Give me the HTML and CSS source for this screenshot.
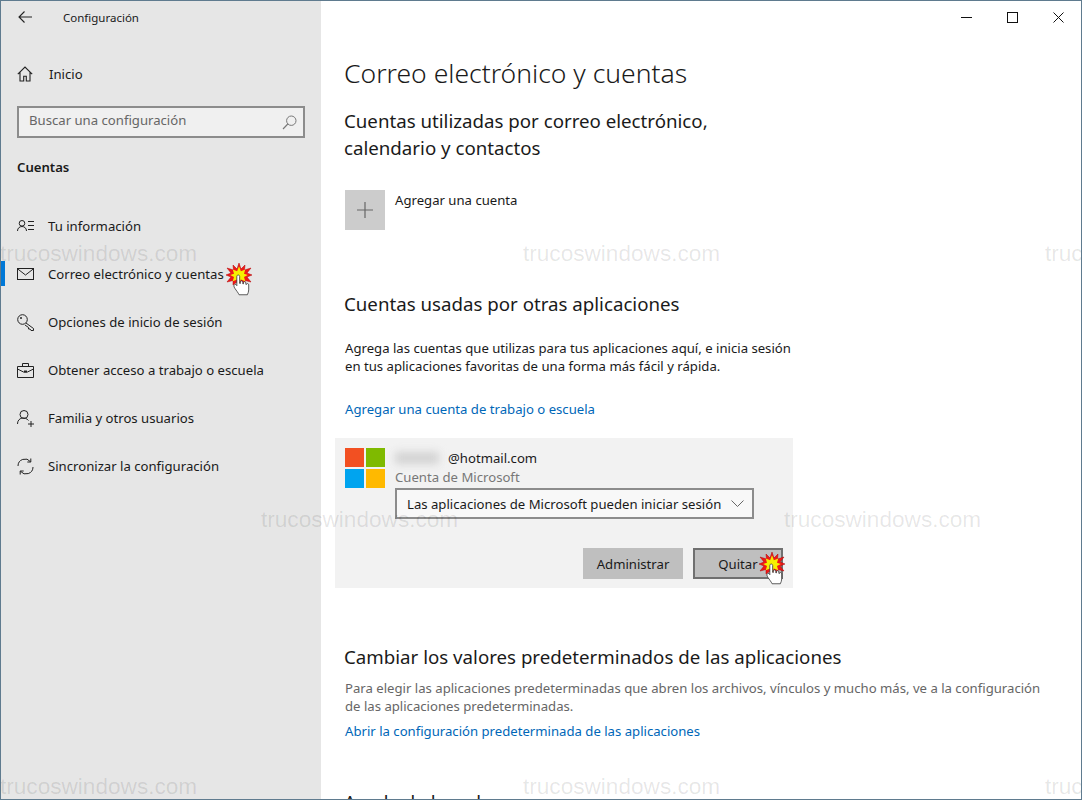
FILE: index.html
```html
<!DOCTYPE html>
<html lang="es">
<head>
<meta charset="utf-8">
<title>Configuración</title>
<link rel="stylesheet" href="styles.css">
</head>
<body>
<svg class="defs" width="0" height="0" aria-hidden="true">
  <symbol id="click" viewBox="0 0 26 36">
    <polygon points="13,0 15,6 19,2 18.500,7 25,5 21,10 26,12 21,14 25,19 19,17.500 19,22 15,19 13,24 11,19 7,22 7,17.500 1,19 5,14 0,12 5,10 1,5 7.500,7 7,2 11,6" fill="#f01818" stroke="#b00000" stroke-width=".5"/>
    <polygon transform="translate(13 12) scale(1.25) translate(-13 -12)" points="13,5 14.500,9 18,7.500 17,11 20,12 17,13.500 18,17 14.500,15.500 13,19 11.500,15.500 8,17 9,13.500 6,12 9,11 8,7.500 11.500,9" fill="#f6f000"/>
    <path transform="translate(8 13) scale(1.13) translate(-8 -13)" d="M10.500 13.500c0-1.800 2.500-1.800 2.500 0v6l.6.100v-1.200c0-1.400 2.100-1.400 2.200 0v1.500l.5.100v-1c0-1.300 2.100-1.300 2.200.100v1.300l.5.100c0-1.200 2-1.100 2 .3v4.500c0 1.800-.6 2.800-1.200 4.300H12.500c-.8-1.800-2.300-3.500-3.800-5.800-.8-1.300-1.200-2.600-.1-3.200 1-.5 1.500.3 1.900 1z" fill="#fff" stroke="#333" stroke-width=".7"/>
  </symbol>
</svg>
<div class="window">
  <aside class="sidebar">
    <div class="titlebar">
      <svg class="back" width="14" height="12" viewBox="0 0 14 12"><path d="M6.500.5 1 6l5.500 5.500M1 6h13" fill="none" stroke="#222" stroke-width="1.100"/></svg>
      <span class="apptitle">Configuración</span>
    </div>
    <div class="home">
      <svg class="icon" width="16" height="16" viewBox="0 0 16 16"><path d="M.8 8.200 8 1l7.200 7.200M3 6.300V15h3.700v-4.700h2.600V15H13V6.300" fill="none" stroke="#222" stroke-width="1.100"/></svg>
      <span>Inicio</span>
    </div>
    <div class="search">
      <span class="search-text">Buscar una configuración</span>
      <svg width="15" height="15" viewBox="0 0 15 15"><circle cx="9.300" cy="5.700" r="4.700" fill="none" stroke="#777" stroke-width="1"/><path d="M5.800 9 1 14" stroke="#777" stroke-width="1.100"/></svg>
    </div>
    <div class="section">Cuentas</div>
    <nav class="nav">
      <div class="nav-item">
        <svg class="icon" width="17" height="12" viewBox="0 0 17 12"><circle cx="5" cy="3.300" r="2.800" fill="none" stroke="#222"/><path d="M.5 11c0-6 9-6 9 0M11 1.500h6M11 5.500h6M11 9.500h6" fill="none" stroke="#222"/></svg>
        <span>Tu información</span>
      </div>
      <div class="nav-item active">
        <svg class="icon" width="17" height="12" viewBox="0 0 17 12"><rect x=".5" y=".5" width="16" height="11" fill="none" stroke="#222"/><path d="M.5.800 8.500 7l8-6.200" fill="none" stroke="#222"/></svg>
        <span>Correo electrónico y cuentas</span>
      </div>
      <div class="nav-item">
        <svg class="icon" width="17" height="17" viewBox="0 0 17 17"><circle cx="5.500" cy="5.500" r="4.800" fill="none" stroke="#222"/><circle cx="4" cy="4" r="1" fill="#222"/><path d="M9 9l7.500 5.500v2h-2.500l-1-1.500h-1.500v-1.500L8 11" fill="none" stroke="#222"/></svg>
        <span>Opciones de inicio de sesión</span>
      </div>
      <div class="nav-item">
        <svg class="icon" width="17" height="15" viewBox="0 0 17 15"><path d="M.5 3.500h16v11H.5zM5.500 3.500V.5h6v3M.5 6l6 3h4l6-3" fill="none" stroke="#222"/><rect x="7" y="7.500" width="3" height="2" fill="#222"/></svg>
        <span>Obtener acceso a trabajo o escuela</span>
      </div>
      <div class="nav-item">
        <svg class="icon" width="17" height="17" viewBox="0 0 17 17"><circle cx="7" cy="4.500" r="4" fill="none" stroke="#222"/><path d="M.5 14c0-7 8-7.500 11-3.500M11 14h6M14 11v6" fill="none" stroke="#222"/></svg>
        <span>Familia y otros usuarios</span>
      </div>
      <div class="nav-item">
        <svg class="icon" width="17" height="17" viewBox="0 0 17 17"><path d="M1 8a7 7 0 0 1 12.500-4.300M16 9a7 7 0 0 1-12.500 4.300M13.800.5v3.500h-3.500M3.200 16.500v-3.500h3.500" fill="none" stroke="#222"/></svg>
        <span>Sincronizar la configuración</span>
      </div>
    </nav>
  </aside>
  <main class="content">
    <div class="controls">
      <span class="ctl"><svg width="11" height="11" viewBox="0 0 11 11"><path d="M0 5.500h11" stroke="#111"/></svg></span>
      <span class="ctl"><svg width="11" height="11" viewBox="0 0 11 11"><rect x=".5" y=".5" width="10" height="10" fill="none" stroke="#111"/></svg></span>
      <span class="ctl"><svg width="11" height="11" viewBox="0 0 11 11"><path d="M.5.500l10 10M10.500.500l-10 10" stroke="#111"/></svg></span>
    </div>
    <h1>Correo electrónico y cuentas</h1>
    <h2 class="h2-first">Cuentas utilizadas por correo electrónico,<br>calendario y contactos</h2>
    <div class="add">
      <span class="tile"><svg width="16" height="16" viewBox="0 0 16 16"><path d="M8 0v16M0 8h16" stroke="#666" stroke-width="1.200"/></svg></span>
      <span class="add-label">Agregar una cuenta</span>
    </div>
    <h2 class="h2-other">Cuentas usadas por otras aplicaciones</h2>
    <p class="desc dark">Agrega las cuentas que utilizas para tus aplicaciones aquí, e inicia sesión<br>en tus aplicaciones favoritas de una forma más fácil y rápida.</p>
    <a class="link link-work">Agregar una cuenta de trabajo o escuela</a>
    <section class="account">
      <div class="account-top">
        <svg class="mslogo" width="40" height="40" viewBox="0 0 40 40"><rect width="19" height="19" fill="#f25022"/><rect x="21" width="19" height="19" fill="#7fba00"/><rect y="21" width="19" height="19" fill="#00a4ef"/><rect x="21" y="21" width="19" height="19" fill="#ffb900"/></svg>
        <div class="account-info">
          <div class="mail"><span class="blurred"></span><span>@hotmail.com</span></div>
          <div class="kind">Cuenta de Microsoft</div>
          <div class="select">
            <span>Las aplicaciones de Microsoft pueden iniciar sesión</span>
            <svg width="13" height="7" viewBox="0 0 13 7"><path d="M.5.500l6 6 6-6" fill="none" stroke="#666"/></svg>
          </div>
        </div>
      </div>
      <div class="buttons">
        <span class="btn btn-manage">Administrar</span>
        <span class="btn btn-remove">Quitar</span>
      </div>
    </section>
    <h2 class="h2-defaults">Cambiar los valores predeterminados de las aplicaciones</h2>
    <p class="desc gray">Para elegir las aplicaciones predeterminadas que abren los archivos, vínculos y mucho más, ve a la configuración<br>de las aplicaciones predeterminadas.</p>
    <a class="link link-defaults">Abrir la configuración predeterminada de las aplicaciones</a>
    <h2 class="h2-help">Ayuda de la web</h2>
  </main>
  <svg class="click click-a"><use href="#click"/></svg>
  <svg class="click click-b"><use href="#click"/></svg>
  <span class="wm wm1">trucoswindows.com</span>
  <span class="wm wm2">trucoswindows.com</span>
  <span class="wm wm3">trucoswindows.com</span>
  <span class="wm wm4">trucoswindows.com</span>
  <span class="wm wm5">trucoswindows.com</span>
  <span class="wm wm6">trucoswindows.com</span>
  <span class="wm wm7">trucoswindows.com</span>
  <span class="wm wm8">trucoswindows.com</span>
</div>
</body>
</html>
```
FILE: styles.css
```css
* { box-sizing: border-box; }
html, body { margin: 0; padding: 0; background: #fff; }
body { font-family: "Noto Sans", "Open Sans", sans-serif; color: #1a1a1a; font-size: 13.15px; }
.defs { position: absolute; }
.window { position: relative; width: 1082px; height: 800px; overflow: hidden; display: flex; border: 1px solid #5f7b8f; background: #fff; }
.sidebar { width: 320px; flex: none; background: #e6e6e6; padding-left: 16px; }
.titlebar { height: 32px; display: flex; align-items: center; gap: 31px; }
.back { margin-left: 1px; }
.apptitle { font-size: 11.5px; }
.home { margin-top: 25px; height: 32px; display: flex; align-items: center; gap: 16px; }
.search { margin-top: 16px; width: 288px; height: 32px; border: 2px solid #8c8c8c; background: #f0f0f0; display: flex; align-items: center; justify-content: space-between; padding: 0 6px 0 10px; color: #666; }
.search-text { margin-bottom: 5px; }
.section { margin-top: 19px; font-weight: 600; line-height: 20px; }
.nav { margin-top: 25px; margin-left: -16px; }
.nav-item { position: relative; height: 48px; display: flex; align-items: center; padding-left: 16px; }
.nav-item .icon { flex: none; }
.nav-item span { position: absolute; left: 47px; }
.nav-item.active::before { content: ""; position: absolute; left: 0; top: 11px; width: 4px; height: 25px; background: #0078d7; }
.content { flex: 1; padding-left: 23px; min-width: 0; }
.controls { height: 32px; display: flex; justify-content: flex-end; }
.ctl { width: 46px; display: flex; align-items: center; justify-content: center; }
h1 { margin: 20px 0 0; font-size: 26.5px; font-weight: 300; line-height: 40px; }
h2 { margin: 0; font-size: 18.7px; font-weight: 400; line-height: 27px; }
.h2-first { margin-top: 14px; }
.add { margin-top: 29px; margin-left: 1px; display: flex; gap: 10px; }
.tile { width: 40px; height: 40px; background: #ccc; display: flex; align-items: center; justify-content: center; }
.add-label { line-height: 20px; }
.h2-other { margin-top: 60px; }
.desc { margin: 0 0 0 1px; line-height: 18px; }
.dark { margin-top: 22px; }
.gray { margin-top: 9px; color: #666; }
.link { display: block; margin-left: 1px; color: #0067b8; line-height: 20px; }
.link-work { margin-top: 24px; }
.account { margin: 19px 0 0 -9px; width: 458px; height: 150px; background: #f2f2f2; padding: 10px 10px 0; }
.account-top { display: flex; gap: 10px; }
.mslogo { flex: none; }
.account-info { display: flex; flex-direction: column; }
.mail { display: flex; align-items: center; line-height: 20px; }
.blurred { width: 44px; height: 12px; margin: 0 9px 0 0; background: #d2d2d2; filter: blur(4px); }
.kind { color: #777; line-height: 18px; }
.select { width: 359px; height: 31px; margin-top: 2px; border: 2px solid #8c8c8c; background: #f8f8f8; display: flex; align-items: center; justify-content: space-between; padding: 0 8px 0 10px; }
.buttons { margin-top: 29px; display: flex; justify-content: flex-end; gap: 10px; }
.btn { height: 31px; display: flex; align-items: center; justify-content: center; background: #bfbfbf; }
.btn-manage { width: 100px; }
.btn-remove { width: 90px; border: 2px solid #707070; }
.h2-defaults { margin-top: 55px; }
.link-defaults { margin-top: 6px; }
.h2-help { margin-top: 47px; }
.click { position: absolute; width: 26px; height: 36px; }
.click-a { left: 225px; top: 262px; }
.click-b { left: 758px; top: 551px; }
.wm { position: absolute; font-family: "Liberation Sans", sans-serif; font-size: 22.6px; color: rgba(0,0,0,.1); white-space: nowrap; pointer-events: none; line-height: 24px; }
.wm1 { left: -1px; top: 241px; }
.wm2 { left: 522px; top: 241px; }
.wm3 { left: 1044px; top: 241px; }
.wm4 { left: 260px; top: 507px; }
.wm5 { left: 783px; top: 507px; }
.wm6 { left: -1px; top: 774px; }
.wm7 { left: 522px; top: 774px; }
.wm8 { left: 1044px; top: 774px; }
```
